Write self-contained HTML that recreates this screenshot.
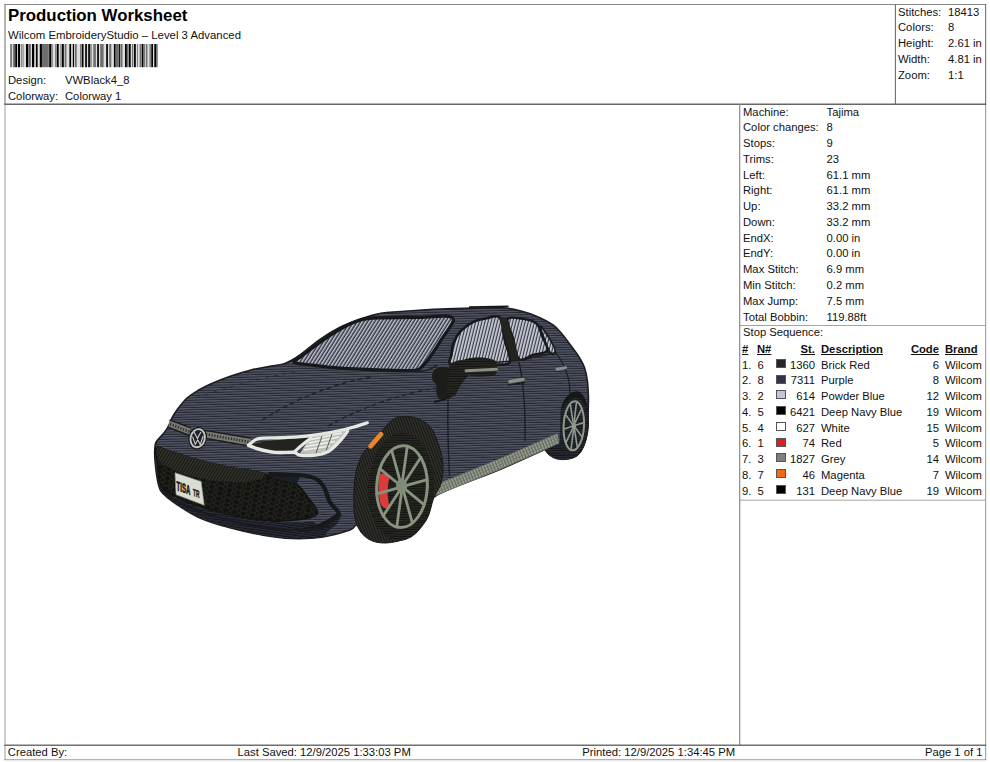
<!DOCTYPE html>
<html><head><meta charset="utf-8"><title>Production Worksheet</title>
<style>
html,body{margin:0;padding:0;background:#fff;}
body{width:990px;height:762px;position:relative;overflow:hidden;font-family:"Liberation Sans",sans-serif;font-size:11.25px;color:#111;}
.ln{position:absolute;background:#7a7a7a;}
.t{position:absolute;white-space:nowrap;line-height:16px;height:16px;}
.r{text-align:right;}
.h{font-weight:bold;text-decoration:underline;}
.sw{position:absolute;width:10px;height:9px;border:1px solid #555;box-sizing:border-box;}
#title{position:absolute;left:8px;top:5.6px;font-size:16.85px;font-weight:bold;line-height:20px;color:#000;white-space:nowrap;}
</style></head><body>
<!-- frame lines -->
<svg style="position:absolute;left:0;top:0" width="990" height="762" viewBox="0 0 990 762">
<g fill="none">
<path d="M4.3,4.5H986.3" stroke="#8a8a8a" stroke-width="1.1"/>
<path d="M5,4V104" stroke="#8c8c8c" stroke-width="1.3"/>
<path d="M5,104V760" stroke="#b4b4b4" stroke-width="1.3"/>
<path d="M985.6,4V104" stroke="#7c7c7c" stroke-width="1.2"/>
<path d="M985.6,104V760" stroke="#a6a6a6" stroke-width="1.2"/>
<path d="M895.4,4V104" stroke="#6e6e6e" stroke-width="1.1"/>
<path d="M4.3,104.3H986.3" stroke="#666" stroke-width="1.5"/>
<path d="M739.7,104V745" stroke="#8a8a8a" stroke-width="1.2"/>
<path d="M739.7,325.5H986" stroke="#9a9a9a" stroke-width=".9"/>
<path d="M739.7,500.2H986" stroke="#9a9a9a" stroke-width=".9"/>
<path d="M4.3,745.2H986.3" stroke="#707070" stroke-width="1.4"/>
<path d="M4.3,759.7H986.3" stroke="#9a9a9a" stroke-width="1.1"/>
</g></svg>

<div id="title">Production Worksheet</div>
<div class="t" id="sub" style="left:8px;top:26.5px;font-size:11.36px">Wilcom EmbroideryStudio – Level 3 Advanced</div>
<div class="t" style="left:8px;top:71.5px">Design:</div><div class="t" style="left:65px;top:71.5px">VWBlack4_8</div>
<div class="t" style="left:8px;top:87.5px">Colorway:</div><div class="t" style="left:65px;top:87.5px">Colorway 1</div>

<!-- BARCODE -->
<svg style="position:absolute;left:0;top:44px" width="170" height="24" viewBox="0 0 170 24"><rect x="10.4" y="0" width="147.4" height="23.2" fill="#000" opacity=".13"/><rect x="10.2" y="0" width="1.7" height="23.2" fill="#000" opacity="0.5"/><rect x="13.2" y="0" width="2.1" height="23.2" fill="#000" opacity="0.55"/><rect x="15.3" y="0" width="1.7" height="23.2" fill="#000" opacity="1"/><rect x="17.9" y="0" width="2.1" height="23.2" fill="#000" opacity="1"/><rect x="20.9" y="0" width="0.8" height="23.2" fill="#000" opacity="0.5"/><rect x="22.6" y="0" width="0.9" height="23.2" fill="#000" opacity="0.5"/><rect x="26.0" y="0" width="2.2" height="23.2" fill="#000" opacity="1"/><rect x="28.6" y="0" width="2.2" height="23.2" fill="#000" opacity="0.55"/><rect x="32.0" y="0" width="2.2" height="23.2" fill="#000" opacity="1"/><rect x="35.9" y="0" width="1.7" height="23.2" fill="#000" opacity="1"/><rect x="39.8" y="0" width="2.1" height="23.2" fill="#000" opacity="1"/><rect x="41.9" y="0" width="6.9" height="23.2" fill="#000" opacity="0.5"/><rect x="49.2" y="0" width="2.2" height="23.2" fill="#000" opacity="1"/><rect x="52.0" y="0" width="0.8" height="23.2" fill="#000" opacity="0.4"/><rect x="55.2" y="0" width="1.3" height="23.2" fill="#000" opacity="0.5"/><rect x="56.9" y="0" width="1.8" height="23.2" fill="#000" opacity="1"/><rect x="60.4" y="0" width="1.2" height="23.2" fill="#000" opacity="0.5"/><rect x="62.0" y="0" width="1.8" height="23.2" fill="#000" opacity="1"/><rect x="64.7" y="0" width="1.7" height="23.2" fill="#000" opacity="0.5"/><rect x="69.4" y="0" width="1.7" height="23.2" fill="#000" opacity="1"/><rect x="72.8" y="0" width="1.3" height="23.2" fill="#000" opacity="1"/><rect x="75.0" y="0" width="1.7" height="23.2" fill="#000" opacity="0.5"/><rect x="80.1" y="0" width="1.3" height="23.2" fill="#000" opacity="0.5"/><rect x="81.8" y="0" width="1.7" height="23.2" fill="#000" opacity="1"/><rect x="85.2" y="0" width="1.7" height="23.2" fill="#000" opacity="1"/><rect x="88.2" y="0" width="1.7" height="23.2" fill="#000" opacity="1"/><rect x="90.3" y="0" width="1.3" height="23.2" fill="#000" opacity="0.5"/><rect x="93.3" y="0" width="2.6" height="23.2" fill="#000" opacity="0.5"/><rect x="97.2" y="0" width="1.7" height="23.2" fill="#000" opacity="1"/><rect x="100.2" y="0" width="3.4" height="23.2" fill="#000" opacity="0.5"/><rect x="106.2" y="0" width="1.7" height="23.2" fill="#000" opacity="1"/><rect x="109.2" y="0" width="2.1" height="23.2" fill="#000" opacity="0.5"/><rect x="113.9" y="0" width="1.7" height="23.2" fill="#000" opacity="1"/><rect x="116.0" y="0" width="2.2" height="23.2" fill="#000" opacity="0.5"/><rect x="118.6" y="0" width="1.3" height="23.2" fill="#000" opacity="1"/><rect x="120.4" y="0" width="2.1" height="23.2" fill="#000" opacity="0.5"/><rect x="125.0" y="0" width="1.8" height="23.2" fill="#000" opacity="1"/><rect x="126.8" y="0" width="1.7" height="23.2" fill="#000" opacity="0.5"/><rect x="128.9" y="0" width="1.8" height="23.2" fill="#000" opacity="1"/><rect x="132.0" y="0" width="1.2" height="23.2" fill="#000" opacity="0.5"/><rect x="134.0" y="0" width="1.8" height="23.2" fill="#000" opacity="1"/><rect x="137.0" y="0" width="1.0" height="23.2" fill="#000" opacity="0.4"/><rect x="139.7" y="0" width="1.7" height="23.2" fill="#000" opacity="0.5"/><rect x="141.8" y="0" width="1.7" height="23.2" fill="#000" opacity="1"/><rect x="144.0" y="0" width="1.2" height="23.2" fill="#000" opacity="0.45"/><rect x="146.0" y="0" width="1.4" height="23.2" fill="#000" opacity="0.5"/><rect x="149.5" y="0" width="1.3" height="23.2" fill="#000" opacity="0.5"/><rect x="151.3" y="0" width="1.7" height="23.2" fill="#000" opacity="1"/><rect x="154.3" y="0" width="2.1" height="23.2" fill="#000" opacity="1"/><rect x="156.8" y="0" width="0.9" height="23.2" fill="#000" opacity="0.5"/></svg>

<!-- HEADER RIGHT -->
<div class="t" style="left:898px;top:3.6px">Stitches:</div><div class="t" style="left:948px;top:3.6px">18413</div>
<div class="t" style="left:898px;top:19.4px">Colors:</div><div class="t" style="left:948px;top:19.4px">8</div>
<div class="t" style="left:898px;top:35.2px">Height:</div><div class="t" style="left:948px;top:35.2px">2.61 in</div>
<div class="t" style="left:898px;top:51.0px">Width:</div><div class="t" style="left:948px;top:51.0px">4.81 in</div>
<div class="t" style="left:898px;top:66.8px">Zoom:</div><div class="t" style="left:948px;top:66.8px">1:1</div>

<!-- INFO -->
<div class="t" style="left:743px;top:103.5px">Machine:</div><div class="t" style="left:826.5px;top:103.5px">Tajima</div>
<div class="t" style="left:743px;top:119.3px">Color changes:</div><div class="t" style="left:826.5px;top:119.3px">8</div>
<div class="t" style="left:743px;top:135.0px">Stops:</div><div class="t" style="left:826.5px;top:135.0px">9</div>
<div class="t" style="left:743px;top:150.8px">Trims:</div><div class="t" style="left:826.5px;top:150.8px">23</div>
<div class="t" style="left:743px;top:166.6px">Left:</div><div class="t" style="left:826.5px;top:166.6px">61.1 mm</div>
<div class="t" style="left:743px;top:182.3px">Right:</div><div class="t" style="left:826.5px;top:182.3px">61.1 mm</div>
<div class="t" style="left:743px;top:198.1px">Up:</div><div class="t" style="left:826.5px;top:198.1px">33.2 mm</div>
<div class="t" style="left:743px;top:213.9px">Down:</div><div class="t" style="left:826.5px;top:213.9px">33.2 mm</div>
<div class="t" style="left:743px;top:229.7px">EndX:</div><div class="t" style="left:826.5px;top:229.7px">0.00 in</div>
<div class="t" style="left:743px;top:245.4px">EndY:</div><div class="t" style="left:826.5px;top:245.4px">0.00 in</div>
<div class="t" style="left:743px;top:261.2px">Max Stitch:</div><div class="t" style="left:826.5px;top:261.2px">6.9 mm</div>
<div class="t" style="left:743px;top:277.0px">Min Stitch:</div><div class="t" style="left:826.5px;top:277.0px">0.2 mm</div>
<div class="t" style="left:743px;top:292.7px">Max Jump:</div><div class="t" style="left:826.5px;top:292.7px">7.5 mm</div>
<div class="t" style="left:743px;top:308.5px">Total Bobbin:</div><div class="t" style="left:826.5px;top:308.5px">119.88ft</div>
<div class="t" style="left:743px;top:324.4px">Stop Sequence:</div>

<!-- STOPS -->
<div class="t h" style="left:742px;top:340.8px">#</div><div class="t h" style="left:757px;top:340.8px">N#</div><div class="t h r" style="left:775px;width:40px;top:340.8px">St.</div><div class="t h" style="left:821px;top:340.8px">Description</div><div class="t h r" style="left:899px;width:40px;top:340.8px">Code</div><div class="t h" style="left:945px;top:340.8px">Brand</div>
<div class="t" style="left:742px;top:356.6px">1.</div><div class="t" style="left:757.5px;top:356.6px">6</div><div class="sw" style="left:776px;top:358.8px;background:#262626"></div><div class="t r" style="left:775px;width:40px;top:356.6px">1360</div><div class="t" style="left:821px;top:356.6px">Brick Red</div><div class="t r" style="left:899px;width:40px;top:356.6px">6</div><div class="t" style="left:945px;top:356.6px">Wilcom</div>
<div class="t" style="left:742px;top:372.3px">2.</div><div class="t" style="left:757.5px;top:372.3px">8</div><div class="sw" style="left:776px;top:374.5px;background:#33324a"></div><div class="t r" style="left:775px;width:40px;top:372.3px">7311</div><div class="t" style="left:821px;top:372.3px">Purple</div><div class="t r" style="left:899px;width:40px;top:372.3px">8</div><div class="t" style="left:945px;top:372.3px">Wilcom</div>
<div class="t" style="left:742px;top:388.1px">3.</div><div class="t" style="left:757.5px;top:388.1px">2</div><div class="sw" style="left:776px;top:390.3px;background:#c4c2de"></div><div class="t r" style="left:775px;width:40px;top:388.1px">614</div><div class="t" style="left:821px;top:388.1px">Powder Blue</div><div class="t r" style="left:899px;width:40px;top:388.1px">12</div><div class="t" style="left:945px;top:388.1px">Wilcom</div>
<div class="t" style="left:742px;top:403.8px">4.</div><div class="t" style="left:757.5px;top:403.8px">5</div><div class="sw" style="left:776px;top:406.0px;background:#000000"></div><div class="t r" style="left:775px;width:40px;top:403.8px">6421</div><div class="t" style="left:821px;top:403.8px">Deep Navy Blue</div><div class="t r" style="left:899px;width:40px;top:403.8px">19</div><div class="t" style="left:945px;top:403.8px">Wilcom</div>
<div class="t" style="left:742px;top:419.6px">5.</div><div class="t" style="left:757.5px;top:419.6px">4</div><div class="sw" style="left:776px;top:421.8px;background:#ffffff"></div><div class="t r" style="left:775px;width:40px;top:419.6px">627</div><div class="t" style="left:821px;top:419.6px">White</div><div class="t r" style="left:899px;width:40px;top:419.6px">15</div><div class="t" style="left:945px;top:419.6px">Wilcom</div>
<div class="t" style="left:742px;top:435.3px">6.</div><div class="t" style="left:757.5px;top:435.3px">1</div><div class="sw" style="left:776px;top:437.5px;background:#d8202c"></div><div class="t r" style="left:775px;width:40px;top:435.3px">74</div><div class="t" style="left:821px;top:435.3px">Red</div><div class="t r" style="left:899px;width:40px;top:435.3px">5</div><div class="t" style="left:945px;top:435.3px">Wilcom</div>
<div class="t" style="left:742px;top:451.1px">7.</div><div class="t" style="left:757.5px;top:451.1px">3</div><div class="sw" style="left:776px;top:453.3px;background:#808080"></div><div class="t r" style="left:775px;width:40px;top:451.1px">1827</div><div class="t" style="left:821px;top:451.1px">Grey</div><div class="t r" style="left:899px;width:40px;top:451.1px">14</div><div class="t" style="left:945px;top:451.1px">Wilcom</div>
<div class="t" style="left:742px;top:466.8px">8.</div><div class="t" style="left:757.5px;top:466.8px">7</div><div class="sw" style="left:776px;top:469.0px;background:#f26a10"></div><div class="t r" style="left:775px;width:40px;top:466.8px">46</div><div class="t" style="left:821px;top:466.8px">Magenta</div><div class="t r" style="left:899px;width:40px;top:466.8px">7</div><div class="t" style="left:945px;top:466.8px">Wilcom</div>
<div class="t" style="left:742px;top:482.6px">9.</div><div class="t" style="left:757.5px;top:482.6px">5</div><div class="sw" style="left:776px;top:484.8px;background:#000000"></div><div class="t r" style="left:775px;width:40px;top:482.6px">131</div><div class="t" style="left:821px;top:482.6px">Deep Navy Blue</div><div class="t r" style="left:899px;width:40px;top:482.6px">19</div><div class="t" style="left:945px;top:482.6px">Wilcom</div>

<!-- FOOTER -->
<div class="t" style="left:7.8px;top:743.9px">Created By:</div><div class="t" style="left:237.5px;top:743.9px;font-size:11.25px">Last Saved: 12/9/2025 1:33:03 PM</div><div class="t" style="left:582.3px;top:743.9px;font-size:11.27px">Printed: 12/9/2025 1:34:45 PM</div><div class="t r" style="left:882.5px;width:100px;top:743.9px">Page 1 of 1</div>

<!-- CAR -->
<svg id="car" style="position:absolute;left:0;top:0" width="990" height="762" viewBox="0 0 990 762">
<defs>
<pattern id="pb" width="8" height="2.4" patternUnits="userSpaceOnUse" patternTransform="rotate(-1.5)"><rect width="8" height="2.4" fill="#535765"/><rect y="1.35" width="8" height="1.05" fill="#242630"/></pattern>
<pattern id="pk" width="8" height="2.4" patternUnits="userSpaceOnUse" patternTransform="rotate(-1.5)"><rect width="8" height="2.4" fill="#2a2b26"/><rect y="1.3" width="8" height="1.1" fill="#121310"/></pattern>
<pattern id="pg" width="3" height="8" patternUnits="userSpaceOnUse" patternTransform="rotate(32)"><rect width="3" height="8" fill="#c6c9d3"/><rect x="1.5" width="1.5" height="8" fill="#2e3140"/></pattern>
<pattern id="pg2" width="3" height="8" patternUnits="userSpaceOnUse" patternTransform="rotate(14)"><rect width="3" height="8" fill="#cdd0d8"/><rect x="1.8" width="1.2" height="8" fill="#333645"/></pattern>
<pattern id="pt" width="2.6" height="8" patternUnits="userSpaceOnUse" patternTransform="rotate(-20)"><rect width="2.6" height="8" fill="#33342e"/><rect x="1.4" width="1.2" height="8" fill="#151612"/></pattern>
<pattern id="ps" width="3" height="3" patternUnits="userSpaceOnUse" patternTransform="rotate(-23)"><rect width="3" height="3" fill="#a3aa9c"/><rect x="1.7" width="1.3" height="3" fill="#5e6458"/><rect y="1.8" width="3" height="1.2" fill="#6b7165" opacity=".7"/></pattern>
<pattern id="pl" width="8" height="2.4" patternUnits="userSpaceOnUse" patternTransform="rotate(8)"><rect width="8" height="2.4" fill="#2c2e3a"/><rect y="1.2" width="8" height="1.2" fill="#14151b"/></pattern>
<pattern id="ph" width="2.7" height="8" patternUnits="userSpaceOnUse" patternTransform="rotate(32)"><rect width="2.7" height="8" fill="#171814"/><rect x="1.5" width="1.1" height="8" fill="#3c3d35"/></pattern>
<pattern id="pm" width="9" height="10" patternUnits="userSpaceOnUse" patternTransform="rotate(11)"><rect width="9" height="10" fill="#121310"/><path d="M0,2.5L1.5,0L6,0L7.5,2.5L6,5L1.5,5ZM7.5,2.5L9,2.5M6,5L7.5,7.5L6,10M1.5,5L0,7.5L1.5,10M7.5,7.5L9,7.5" fill="none" stroke="#2b2c25" stroke-width=".95"/></pattern>
<pattern id="pl2" width="8" height="2.4" patternUnits="userSpaceOnUse" patternTransform="rotate(-1.5)"><rect width="8" height="2.4" fill="#2d2f38"/><rect y="1.2" width="8" height="1.2" fill="#131418"/></pattern>
<clipPath id="cb"><path d="M169.0,425.0C170.4,422.3 171.1,419.6 172.5,417.0C173.9,414.4 174.9,412.6 177.3,409.4C179.7,406.2 183.5,401.2 187.0,398.0C190.5,394.8 194.4,392.6 198.3,390.3C202.2,388.0 205.2,386.4 210.6,384.0C216.0,381.6 224.3,378.3 231.0,376.0C237.7,373.7 244.3,371.7 251.0,370.0C257.7,368.3 265.3,367.1 271.0,366.0C276.7,364.9 280.2,365.3 285.0,363.5C289.8,361.7 294.2,359.0 300.0,355.0C305.8,351.0 313.3,343.9 320.0,339.3C326.7,334.7 333.3,330.7 340.0,327.3C346.7,323.9 353.2,321.4 360.0,319.0C366.8,316.6 374.2,314.4 381.0,313.2C387.8,311.9 391.0,312.2 401.0,311.5C411.0,310.8 427.5,309.6 441.0,309.0C454.5,308.4 471.7,308.2 482.0,308.0C492.3,307.8 496.5,307.3 503.0,307.8C509.5,308.3 515.3,309.6 521.0,311.0C526.7,312.4 531.7,314.2 537.0,316.5C542.3,318.8 548.8,322.1 553.0,325.0C557.2,327.9 559.3,330.9 562.0,334.0C564.7,337.1 566.5,339.7 569.3,343.5C572.1,347.3 576.5,352.9 579.0,357.0C581.5,361.1 583.2,364.0 584.6,368.0C586.0,372.0 586.8,376.3 587.4,381.0C588.0,385.7 588.2,391.8 588.4,396.0C588.5,400.2 588.4,401.7 588.3,406.0C588.1,410.3 588.2,416.7 587.5,422.0C586.8,427.3 586.6,434.3 584.0,438.0C581.4,441.7 576.1,443.1 572.0,444.0C567.9,444.9 571.5,439.2 559.5,443.5C547.5,447.8 520.7,460.8 500.0,469.5C479.3,478.2 448.2,488.6 435.5,496.0C422.8,503.4 429.1,508.7 424.0,514.0C418.9,519.3 411.3,524.7 405.0,528.0C398.7,531.3 391.8,533.5 386.0,534.0C380.2,534.5 374.8,532.5 370.0,531.0C365.2,529.5 360.3,525.2 357.0,525.0C353.7,524.8 355.9,528.0 350.0,530.0C344.1,532.0 331.5,535.8 321.7,537.2C311.9,538.6 301.2,538.8 291.4,538.5C281.6,538.2 273.1,536.9 263.0,535.2C252.9,533.5 241.2,530.9 230.8,528.1C220.4,525.3 209.4,522.2 200.5,518.3C191.6,514.4 183.3,508.7 177.3,504.8C171.3,500.9 167.7,498.1 164.6,495.0C161.5,491.9 160.4,491.8 158.8,486.0C157.2,480.2 155.6,467.3 155.0,460.4C154.4,453.5 154.7,448.1 155.3,444.5C155.9,440.9 157.1,440.9 158.5,439.0C159.9,437.1 162.2,435.3 164.0,433.0C165.8,430.7 167.6,427.7 169.0,425.0Z"/></clipPath>
</defs>
<!-- rear tyre -->
<path d="M545.0,448.0C544.8,443.4 549.5,437.2 552.0,430.0C554.5,422.8 556.2,411.3 560.0,405.0C563.8,398.7 570.7,392.0 575.0,392.0C579.3,392.0 583.8,399.5 586.0,405.0C588.2,410.5 588.7,418.7 588.5,425.0C588.3,431.3 586.8,438.0 585.0,443.0C583.2,448.0 581.2,452.2 578.0,455.0C574.8,457.8 570.2,459.1 566.0,459.5C561.8,459.9 556.5,459.4 553.0,457.5C549.5,455.6 545.2,452.6 545.0,448.0Z" fill="url(#pk)" stroke="#1a1b18" stroke-width="1"/>
<!-- body -->
<path d="M169.0,425.0C170.4,422.3 171.1,419.6 172.5,417.0C173.9,414.4 174.9,412.6 177.3,409.4C179.7,406.2 183.5,401.2 187.0,398.0C190.5,394.8 194.4,392.6 198.3,390.3C202.2,388.0 205.2,386.4 210.6,384.0C216.0,381.6 224.3,378.3 231.0,376.0C237.7,373.7 244.3,371.7 251.0,370.0C257.7,368.3 265.3,367.1 271.0,366.0C276.7,364.9 280.2,365.3 285.0,363.5C289.8,361.7 294.2,359.0 300.0,355.0C305.8,351.0 313.3,343.9 320.0,339.3C326.7,334.7 333.3,330.7 340.0,327.3C346.7,323.9 353.2,321.4 360.0,319.0C366.8,316.6 374.2,314.4 381.0,313.2C387.8,311.9 391.0,312.2 401.0,311.5C411.0,310.8 427.5,309.6 441.0,309.0C454.5,308.4 471.7,308.2 482.0,308.0C492.3,307.8 496.5,307.3 503.0,307.8C509.5,308.3 515.3,309.6 521.0,311.0C526.7,312.4 531.7,314.2 537.0,316.5C542.3,318.8 548.8,322.1 553.0,325.0C557.2,327.9 559.3,330.9 562.0,334.0C564.7,337.1 566.5,339.7 569.3,343.5C572.1,347.3 576.5,352.9 579.0,357.0C581.5,361.1 583.2,364.0 584.6,368.0C586.0,372.0 586.8,376.3 587.4,381.0C588.0,385.7 588.2,391.8 588.4,396.0C588.5,400.2 588.4,401.7 588.3,406.0C588.1,410.3 588.2,416.7 587.5,422.0C586.8,427.3 586.6,434.3 584.0,438.0C581.4,441.7 576.1,443.1 572.0,444.0C567.9,444.9 571.5,439.2 559.5,443.5C547.5,447.8 520.7,460.8 500.0,469.5C479.3,478.2 448.2,488.6 435.5,496.0C422.8,503.4 429.1,508.7 424.0,514.0C418.9,519.3 411.3,524.7 405.0,528.0C398.7,531.3 391.8,533.5 386.0,534.0C380.2,534.5 374.8,532.5 370.0,531.0C365.2,529.5 360.3,525.2 357.0,525.0C353.7,524.8 355.9,528.0 350.0,530.0C344.1,532.0 331.5,535.8 321.7,537.2C311.9,538.6 301.2,538.8 291.4,538.5C281.6,538.2 273.1,536.9 263.0,535.2C252.9,533.5 241.2,530.9 230.8,528.1C220.4,525.3 209.4,522.2 200.5,518.3C191.6,514.4 183.3,508.7 177.3,504.8C171.3,500.9 167.7,498.1 164.6,495.0C161.5,491.9 160.4,491.8 158.8,486.0C157.2,480.2 155.6,467.3 155.0,460.4C154.4,453.5 154.7,448.1 155.3,444.5C155.9,440.9 157.1,440.9 158.5,439.0C159.9,437.1 162.2,435.3 164.0,433.0C165.8,430.7 167.6,427.7 169.0,425.0Z" fill="url(#pb)" stroke="#1c1d22" stroke-width="1.6" stroke-linejoin="round"/>
<!-- roof rail -->
<path d="M469,307.2L508.5,306.4" stroke="#16171a" stroke-width="1.8" fill="none"/>
<!-- windshield frame + glass -->
<path d="M294.0,362.3C292.6,360.9 297.1,359.7 301.5,356.3C305.9,352.9 313.7,346.8 320.2,342.2C326.7,337.6 333.7,332.7 340.4,329.0C347.1,325.3 353.9,321.9 360.6,320.0C367.3,318.1 370.7,318.2 380.8,317.8C390.9,317.4 409.2,317.3 421.2,317.3C433.2,317.3 449.3,314.3 452.7,318.0C456.1,321.7 445.3,332.7 441.4,339.4C437.5,346.1 432.6,353.4 429.3,358.0C426.0,362.6 424.2,364.9 421.5,367.0C418.8,369.1 419.8,370.0 413.0,370.5C406.2,371.0 393.1,370.4 381.0,370.0C368.9,369.6 352.2,369.1 340.4,368.2C328.6,367.3 317.7,365.8 310.0,364.8C302.3,363.8 295.4,363.7 294.0,362.3Z" fill="url(#pg)" stroke="#17181b" stroke-width="3.2" stroke-linejoin="round"/>
<path d="M450.3,363.7C447.2,362.1 450.8,359.0 451.3,355.6C451.8,352.2 451.8,347.5 453.3,343.5C454.8,339.5 457.2,334.9 460.4,331.4C463.6,327.9 468.1,324.5 472.5,322.3C476.9,320.1 482.1,319.0 486.7,318.2C491.2,317.4 496.8,314.1 499.8,317.6C502.8,321.1 502.8,331.6 504.5,339.0C506.2,346.4 511.3,357.4 509.9,361.7C508.4,366.0 502.4,364.1 495.8,364.7C489.2,365.2 477.6,365.2 470.0,365.0C462.4,364.8 453.4,365.3 450.3,363.7Z" fill="url(#pg2)" stroke="#17181b" stroke-width="2.6" stroke-linejoin="round"/>
<path d="M507.9,318.8C510.2,315.7 522.2,318.7 527.1,319.6C532.0,320.5 534.6,321.4 537.2,324.3C539.8,327.2 540.8,332.6 542.5,337.0C544.2,341.4 548.9,347.6 547.3,350.6C545.7,353.6 537.7,353.6 533.0,355.0C528.3,356.4 522.3,362.0 519.0,359.2C515.7,356.4 514.9,344.7 513.0,338.0C511.1,331.3 505.5,321.9 507.9,318.8Z" fill="url(#pg2)" stroke="#17181b" stroke-width="2.4" stroke-linejoin="round"/>
<path d="M540.2,326.3C540.1,324.0 546.8,334.2 549.3,338.4C551.8,342.6 555.3,349.3 555.4,351.6C555.5,353.9 552.5,356.6 550.0,352.4C547.5,348.2 540.3,328.6 540.2,326.3Z" fill="url(#pg2)" stroke="#17181b" stroke-width="1.6" stroke-linejoin="round"/>
<!-- B pillar -->
<path d="M499.5,317.5L506.5,318L519,359.5L511.5,361.5Z" fill="#23241e"/>
<!-- door lines -->
<path d="M519,362C523,380 525.5,410 525,441" stroke="#1b1c24" stroke-width="1.3" fill="none"/>
<path d="M449,372C447.5,400 447.5,440 449.5,476" stroke="#1b1c24" stroke-width="1.3" fill="none"/>
<path d="M556,353C566,366 570,380 570,394" stroke="#1b1c24" stroke-width="1.2" fill="none"/>
<path d="M449,366L519,360.5L556,352.5" stroke="#1b1c24" stroke-width="1.4" fill="none"/>
<!-- hood creases -->
<path d="M196,398C230,386 265,377 300,371" stroke="#1d1e26" stroke-width="1" stroke-dasharray="4 5" fill="none" opacity=".6"/>
<path d="M262,420C300,396 340,382 372,377" stroke="#1d1e26" stroke-width="1.3" stroke-dasharray="5 3" fill="none"/>
<path d="M328,426C360,408 400,394 436,388" stroke="#1d1e26" stroke-width="1.2" stroke-dasharray="5 3" fill="none"/>
<path d="M415,372C425,372 432,369 437,365" stroke="#1d1e26" stroke-width="1.3" fill="none"/>
<!-- mirror -->
<path d="M433,372C436,366 446,366 452,369C457,372 459,380 458,388C456,397 448,400 440,399C435,397 437,388 436,384C432,382 431,376 433,372Z" fill="#1c1d19"/>
<path d="M463.5,360C472,356 488,356.5 496,361C498,366 497.5,372 495,375.5C484,377.5 470,377 464.5,374C462,370 462,364 463.5,360Z" fill="url(#pk)"/>
<path d="M450,364C456,360 462,359 467,360L468,376C462,382 458,390 455,396L446,394Z" fill="url(#pk)"/>
<path d="M466,370.8L496.5,369.3" stroke="#8c9086" stroke-width="3" stroke-linecap="round"/>
<path d="M434,402L446,399" stroke="#17181b" stroke-width="2.2"/>
<!-- door handles -->
<path d="M510,381.5L523,379.5" stroke="#8b9088" stroke-width="3.6" stroke-linecap="round"/>
<path d="M508,385L525,382.6" stroke="#1a1b1f" stroke-width="1.5"/>
<path d="M557,369.3L565.5,367.6" stroke="#8b9088" stroke-width="3" stroke-linecap="round"/>
<!-- side skirt -->
<path d="M435.2,484.8L500.0,458.4L557.4,433.3L559.4,443.4L500.0,469.5L435.2,496.0Z" fill="url(#ps)"/>
<!-- rear arch + wheel -->
<path d="M560.5,410C563,398 571,391 578,391.5C584,394 588,402 588.3,414L588,430C587,442 583,452 577,456.5C570,460 560,459.5 553,457.5L545,450L559.8,443.2Z" fill="url(#pl2)"/>
<path d="M561,409C564,397 571,390.5 578,391.5C584,394 587.5,402 588,412C585,402 581,397.5 576,397.5C570,398 565,403 561,409Z" fill="#16171a"/>
<ellipse cx="573.8" cy="425.8" rx="10.2" ry="24.6" fill="none" stroke="#8f9a8c" stroke-width="2" transform="rotate(3 573.8 425.8)"/>
<g stroke="#8f9a8c" stroke-width="1.6"><line x1="574.1" y1="422.2" x2="576.6" y2="401.6"/><line x1="574.9" y1="423.2" x2="581.8" y2="408.7"/><line x1="575.3" y1="425.3" x2="584.0" y2="422.4"/><line x1="575.2" y1="427.5" x2="582.3" y2="437.3"/><line x1="574.5" y1="429.1" x2="577.4" y2="447.9"/><line x1="573.5" y1="429.4" x2="571.0" y2="450.0"/><line x1="572.7" y1="428.4" x2="565.8" y2="442.9"/><line x1="572.3" y1="426.3" x2="563.6" y2="429.2"/><line x1="572.4" y1="424.1" x2="565.3" y2="414.3"/><line x1="573.1" y1="422.5" x2="570.2" y2="403.7"/></g>
<ellipse cx="573.8" cy="425.8" rx="2.2" ry="3.4" fill="#8f9a8c"/>
<!-- front wheel -->
<path d="M353.8,502.0C353.7,493.7 354.2,482.0 355.6,474.0C357.1,466.0 360.2,458.6 362.5,454.0C364.8,449.4 366.3,450.2 369.5,446.5C372.7,442.8 377.2,436.2 381.5,431.5C385.8,426.8 389.7,420.7 395.0,418.3C400.3,415.9 407.7,416.0 413.5,417.4C419.3,418.8 425.7,421.6 430.0,426.5C434.3,431.4 437.1,440.4 439.2,446.8C441.3,453.2 442.6,458.9 442.9,465.0C443.2,471.1 442.5,478.0 441.0,483.5C439.5,489.0 436.1,491.9 433.7,498.0C431.3,504.1 430.4,513.5 426.4,520.0C422.4,526.5 416.5,533.0 409.8,536.8C403.1,540.6 393.0,542.7 386.0,543.0C379.0,543.3 372.5,541.8 367.6,538.6C362.7,535.4 358.8,530.1 356.5,524.0C354.2,517.9 353.9,510.3 353.8,502.0Z" fill="url(#pt)" stroke="#191a17" stroke-width="1"/>
<ellipse cx="401" cy="487" rx="33" ry="54" fill="url(#pk)" transform="rotate(3 401 487)"/>
<path d="M379.6,474C383,472.5 388,474.5 389.4,478C386.8,488 387.2,498 390,508C387,510 383,508.5 380.6,504C378.2,495 378,484 379.6,474Z" fill="#db3b3a"/>
<g stroke="#87927f" stroke-width="2.8" stroke-linecap="round"><line x1="402.5" y1="480.6" x2="407.3" y2="446.2"/><line x1="404.6" y1="482.3" x2="420.9" y2="457.3"/><line x1="405.7" y1="485.6" x2="427.2" y2="479.6"/><line x1="405.4" y1="489.4" x2="424.0" y2="504.6"/><line x1="403.8" y1="492.1" x2="412.3" y2="522.8"/><line x1="401.5" y1="492.8" x2="396.7" y2="527.2"/><line x1="399.4" y1="491.1" x2="383.1" y2="516.1"/><line x1="398.3" y1="487.8" x2="376.8" y2="493.8"/><line x1="398.6" y1="484.0" x2="380.0" y2="468.8"/><line x1="400.2" y1="481.3" x2="391.7" y2="450.6"/></g>
<ellipse cx="402" cy="486.7" rx="25.3" ry="40.9" fill="none" stroke="#87927f" stroke-width="3" transform="rotate(3 402 486.7)"/>
<ellipse cx="401.6" cy="486" rx="5.6" ry="7.2" fill="#808b7a"/>
<!-- orange marker -->
<path d="M370.6,446.3L381,434.2" stroke="#e8862a" stroke-width="4.8" stroke-linecap="round"/>
<!-- front bumper: grille -->
<path clip-path="url(#cb)" d="M150,478L175,498L200,508L231,516L271,522L298,523L312,521L320,526L331,520L338,512L342,515L337,524L327,532L324,542L150,542Z" fill="url(#pl)"/>
<path d="M156.0,447.0C158.2,445.5 162.8,449.1 170.2,451.3C177.6,453.5 190.4,457.7 200.5,460.4C210.6,463.1 221.4,465.6 230.8,467.5C240.2,469.4 249.7,469.8 257.1,471.5C264.5,473.2 268.5,475.9 275.0,478.0C281.5,480.1 290.6,480.9 296.0,484.0C301.4,487.1 303.9,492.2 307.5,496.8C311.1,501.4 316.8,508.1 317.4,511.5C318.0,515.0 315.5,516.0 311.0,517.5C306.5,519.0 297.1,519.9 290.5,520.5C283.9,521.1 281.1,521.9 271.2,521.0C261.2,520.1 242.6,517.4 230.8,515.0C219.0,512.6 209.5,509.8 200.5,506.9C191.5,504.0 183.6,501.0 177.0,497.5C170.4,494.0 164.3,492.2 161.0,486.0C157.7,479.8 157.9,466.9 157.1,460.4C156.3,453.9 153.8,448.5 156.0,447.0Z" fill="url(#pm)" stroke="#121310" stroke-width="1.5"/>
<path d="M155.5,446L170.2,450.8L200.5,460L230.8,467L257,471L266,473.5L262,479L241,482.5L210.6,480.6L190,476L174,470.5L158,461Z" fill="url(#ph)"/>
<path d="M264,473.5L300,476.5L297,484L275,478.5Z" fill="#1d1f27"/>
<path d="M270.0,474.0C273.3,474.2 284.2,474.7 290.0,475.0C295.8,475.3 300.4,475.0 305.0,475.8C309.6,476.6 314.1,477.7 317.4,479.8C320.6,481.9 322.4,484.5 324.5,488.3C326.6,492.1 327.7,498.4 330.0,502.4C332.3,506.4 338.0,509.8 338.5,512.5C339.0,515.2 336.1,516.3 333.0,518.5C329.9,520.7 324.7,523.6 320.0,525.5C315.3,527.4 307.5,529.2 305.0,530.0" fill="none" stroke="#17181a" stroke-width="4.2" stroke-linecap="round" stroke-linejoin="round"/>
<path d="M160,489C175,505 215,519 260,527C285,531 310,531 330,526" fill="none" stroke="#1a1b20" stroke-width="2"/>
<!-- upper grille strip -->
<path d="M169.5,420.5L190.5,428.5L189.5,434.5L168.5,426.5Z" fill="#777a71"/>
<path d="M205.5,431.2L251,439L249,445.2L205.5,437.4Z" fill="#777a71"/>
<path d="M170,424L190,432M206,434.3L249.5,442" stroke="#2a2b28" stroke-width="2.6" stroke-dasharray="1.2 1.6"/>
<path d="M168,427.3L189.5,435.6M205.5,438.4L249,446.2M169.5,419.8L190.5,427.7M205.5,430.4L251,438.2" stroke="#1b1c20" stroke-width="1.3" fill="none"/>
<!-- VW logo -->
<ellipse cx="197.7" cy="438.2" rx="9.2" ry="11.3" fill="#17181a" transform="rotate(14 197.7 438.2)"/><ellipse cx="197.7" cy="438.2" rx="7.1" ry="9.2" fill="#202126" stroke="#c3c6c0" stroke-width="1.9" transform="rotate(14 197.7 438.2)"/>
<path d="M194.2,432.3L197.4,438.4L200.9,432M192.6,436.6L195.3,444.4L197.7,439.8L200.2,444.6L203.2,436" fill="none" stroke="#c6c9c3" stroke-width="1.15" stroke-linejoin="round"/>
<!-- headlight -->
<path d="M310.0,437.0L346.0,430.5L337.0,443.0L326.0,451.5L312.0,454.0L300.0,453.5Z" fill="#bfc2bc"/>
<path d="M311,439.5L342,433M309,443L339,437M306,446.5L335,441.5M304,450L330,446" stroke="#eef0ec" stroke-width="1.7"/><path d="M322,436L316,453M332,434L326,451" stroke="#4a4c48" stroke-width=".9"/>
<path d="M250,445.4C262,440.5 285,439 309,438L295,452C282,452.5 266,451 250,445.4Z" fill="#22231e"/>
<path d="M248.5,445.4C250.2,444.3 252.7,439.9 258.4,438.6C264.0,437.3 273.7,438.2 282.4,437.7C291.1,437.2 301.3,436.8 310.7,435.6C320.1,434.5 331.9,432.2 339.0,430.8C346.1,429.4 348.5,428.5 353.2,427.2C357.9,425.9 364.9,423.5 367.3,422.8" fill="none" stroke="#e6e8e2" stroke-width="3.2" stroke-linecap="round"/>
<path d="M248.5,445.4C250.2,446.0 253.9,447.8 258.4,449.0C262.9,450.2 269.5,451.8 275.4,452.4C281.3,452.9 289.7,451.9 293.7,452.3C297.7,452.7 296.1,454.5 299.4,455.0C302.7,455.5 308.8,455.7 313.5,455.2C318.2,454.7 323.4,454.0 327.7,451.8C331.9,449.6 335.7,445.3 339.0,441.9C342.3,438.5 346.1,433.1 347.5,431.3" fill="none" stroke="#e6e8e2" stroke-width="3.4" stroke-linecap="round" stroke-linejoin="round"/>
<path d="M293.7,452.3C295.1,451.1 299.2,447.3 302.0,445.0C304.8,442.7 309.2,439.4 310.7,438.3" fill="none" stroke="#e6e8e2" stroke-width="3" stroke-linecap="round"/>
<!-- plate -->
<path d="M175,472.7L201.2,481.5L204.2,505.2L176,494.6Z" fill="#d9dcd1" stroke="#8d9088" stroke-width=".6"/>
<text x="0" y="0" font-family="Liberation Sans, sans-serif" font-size="10" font-weight="bold" fill="#15171a" stroke="#15171a" stroke-width=".5" transform="translate(176.6,490.3) skewY(18.5) scale(.6 1.3)">TISA</text>
<text x="0" y="0" font-family="Liberation Sans, sans-serif" font-size="8" font-weight="bold" fill="#15171a" stroke="#15171a" stroke-width=".4" transform="translate(193,495.8) skewY(18.5) scale(.6 1.25)">TR</text>
</svg>
</body></html>
